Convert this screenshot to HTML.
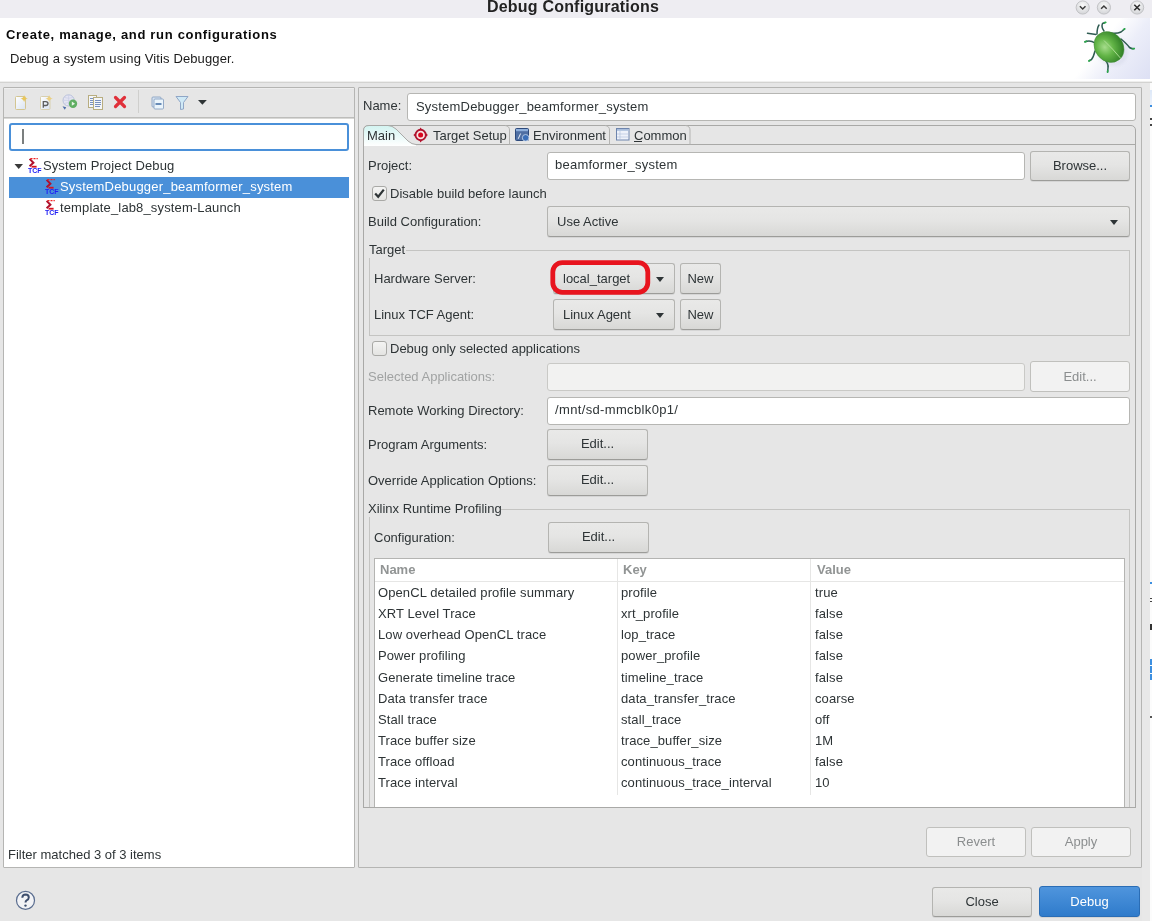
<!DOCTYPE html>
<html><head><meta charset="utf-8">
<style>
*{margin:0;padding:0;box-sizing:border-box}
html,body{width:1152px;height:921px;overflow:hidden}
body{position:relative;background:#e6e6e6;font-family:"Liberation Sans",sans-serif;font-size:13px;color:#2e3436}
.a{position:absolute}
.t{position:absolute;font:13px/15px "Liberation Sans",sans-serif;white-space:pre;color:#2e3436;will-change:transform}
.fld{position:absolute;background:#fff;border:1px solid #b6b6b3;border-radius:3px}
.btn{position:absolute;border:1px solid #b4b4b1;border-bottom-color:#9c9c99;border-radius:3px;background:linear-gradient(#e9e9e8 0%,#e5e5e4 45%,#d8d8d6 100%);box-shadow:0 1px 0 rgba(0,0,0,0.07);font:13px/15px "Liberation Sans",sans-serif;color:#2e3436;text-align:center}
.btn span{position:absolute;left:0;right:0;white-space:pre;will-change:transform}
.dis{background:#f2f2f2;border-color:#c0c0bd;border-bottom-color:#c0c0bd;box-shadow:none;color:#8b8e8f}
.line{position:absolute;background:#b8b8b6}
.cb{position:absolute;width:15px;height:15px;border:1px solid #a9a9a6;border-radius:3px;background:linear-gradient(#f4f4f3,#e4e4e2)}
.arr{position:absolute;width:0;height:0;border-left:4.5px solid transparent;border-right:4.5px solid transparent;border-top:5px solid #2e3436}
</style></head>
<body>
<!-- title bar -->
<div class="a" style="left:0;top:0;width:1152px;height:18px;background:#eeedf2"></div>
<div class="a" style="left:0;top:-2px;width:1146px;text-align:center;font:bold 16px/18px 'Liberation Sans',sans-serif;letter-spacing:0.2px;color:#222;will-change:transform">Debug Configurations</div>

<!-- header -->
<div class="a" style="left:0;top:18px;width:1152px;height:63px;background:#fff"></div>
<div class="a" style="left:0;top:81px;width:1152px;height:1px;background:#efefee"></div>
<div class="a" style="left:0;top:82px;width:1152px;height:1px;background:#d3d3d1"></div>
<div class="t" style="left:6px;top:27px;font:bold 13px/15px 'Liberation Sans',sans-serif;letter-spacing:0.68px;color:#0a0a0a">Create, manage, and run configurations</div>
<div class="t" style="left:10px;top:51px;letter-spacing:0.12px;color:#1a1a1a">Debug a system using Vitis Debugger.</div>

<!-- left panel -->
<div class="a" style="left:3px;top:87px;width:352px;height:781px;border:1px solid #b5b5b3;border-radius:1px;background:#fff"></div>
<div class="a" style="left:4px;top:88px;width:350px;height:29px;background:#e6e6e6"></div>
<div class="a" style="left:4px;top:117px;width:350px;height:1px;background:#bdbdbb"></div>
<div class="a" style="left:4px;top:118px;width:350px;height:1px;background:#d8d8d6"></div>
<div class="a" style="left:4px;top:88px;width:350px;height:1px;background:#eeeeee"></div>
<div class="a" style="left:9px;top:123px;width:340px;height:28px;border:2px solid #4a90d9;border-radius:3px;background:#fff"></div>
<div class="a" style="left:22px;top:129px;width:2px;height:15px;background:#7b7f7f"></div>
<div class="a" style="left:9px;top:177px;width:340px;height:21px;background:#4a90d9"></div>
<div class="t" style="left:43px;top:158px;letter-spacing:0.1px">System Project Debug</div>
<div class="t" style="left:60px;top:179px;color:#fff;letter-spacing:0.2px">SystemDebugger_beamformer_system</div>
<div class="t" style="left:60px;top:200px;letter-spacing:0.14px">template_lab8_system-Launch</div>
<div class="t" style="left:8px;top:847px">Filter matched 3 of 3 items</div>

<!-- right panel -->
<div class="a" style="left:358px;top:87px;width:784px;height:781px;border:1px solid #b5b5b3;border-radius:1px"></div>
<div class="t" style="left:363px;top:98px">Name:</div>
<div class="fld" style="left:407px;top:93px;width:729px;height:28px"></div>
<div class="t" style="left:416px;top:99px;letter-spacing:0.2px">SystemDebugger_beamformer_system</div>

<!-- tab folder -->
<div class="a" style="left:363px;top:125px;width:773px;height:683px;border:1px solid #a9a9a7;border-radius:5px 5px 0 0"></div>
<!-- tab shapes -->
<svg class="a" style="left:363px;top:125px" width="773" height="22" viewBox="0 0 773 22">
 <defs><linearGradient id="mt" x1="0" y1="0" x2="0" y2="1"><stop offset="0" stop-color="#d2f4f1"/><stop offset="1" stop-color="#ffffff"/></linearGradient></defs>
 <path d="M0.5 20 L0.5 6 Q0.5 0.5 6 0.5 L25 0.5 Q29 0.5 33 4 L45 16 Q49 19.5 53 19.5 L53 21 L0.5 21 Z" fill="url(#mt)"/>
 <path d="M0.5 21 L0.5 6 Q0.5 0.5 6 0.5 L25 0.5 Q29 0.5 33 4 L45 16 Q49 19.5 53 19.5 L772 19.5" fill="none" stroke="#a9a9a7" stroke-width="1"/>
 <path d="M142 0.5 Q146.5 1 146.5 5 L146.5 19.5" fill="none" stroke="#b4b4b2" stroke-width="1"/>
 <path d="M242 0.5 Q246.5 1 246.5 5 L246.5 19.5" fill="none" stroke="#b4b4b2" stroke-width="1"/>
 <path d="M322.5 0.5 Q327 1 327 5 L327 19.5" fill="none" stroke="#b4b4b2" stroke-width="1"/>
 <!-- target icon -->
 <circle cx="57.65" cy="10" r="4.4" fill="#fbe3e3"/>
 <path d="M57.65 2.6 L59 4.6 L56.3 4.6Z M57.65 17.4 L59 15.4 L56.3 15.4Z M65 10 L63 8.6 L63 11.4Z M50.3 10 L52.3 8.6 L52.3 11.4Z" fill="#b8102a"/>
 <circle cx="57.65" cy="10" r="5.2" fill="none" stroke="#b0132e" stroke-width="1.9"/>
 <circle cx="57.65" cy="10" r="2.5" fill="#d8061e"/>
 <!-- environment icon -->
 <rect x="152.5" y="3.5" width="13" height="12" rx="1" fill="#4f6fa3" stroke="#2d4a7c" stroke-width="1"/>
 <rect x="153" y="4" width="12" height="2.2" fill="#8fb0dc"/>
 <path d="M155.2 13.8 L157.6 8.5" stroke="#e8eef8" stroke-width="1"/>
 <circle cx="162.6" cy="12.8" r="3.3" fill="#3b6fb8" stroke="#c9d8ee" stroke-width="0.8"/>
 <!-- common icon -->
 <rect x="253.5" y="3.5" width="12.5" height="11.5" fill="#eef2fa" stroke="#6e85ad" stroke-width="1"/>
 <rect x="254" y="4" width="11.5" height="1.8" fill="#a9bddb"/>
 <path d="M257 6 V14.5 M254 9 H265.5 M254 12 H265.5" stroke="#b5c4dc" stroke-width="0.7"/>
</svg>
<div class="t" style="left:367px;top:128px">Main</div>
<div class="t" style="left:433px;top:128px">Target Setup</div>
<div class="t" style="left:533px;top:128px">Environment</div>
<div class="t" style="left:634px;top:128px">Common</div>

<div class="t" style="left:368px;top:158px">Project:</div>
<div class="fld" style="left:547px;top:152px;width:478px;height:28px"></div>
<div class="t" style="left:555px;top:157px;letter-spacing:0.24px">beamformer_system</div>
<div class="btn" style="left:1030px;top:151px;width:100px;height:30px"><span style="top:6px">Browse...</span></div>

<div class="cb" style="left:372px;top:186px"></div>
<div class="t" style="left:390px;top:186px">Disable build before launch</div>

<div class="t" style="left:368px;top:214px">Build Configuration:</div>
<div class="btn" style="left:547px;top:206px;width:583px;height:31px"></div>
<div class="t" style="left:557px;top:214px">Use Active</div>
<div class="arr" style="left:1110px;top:220px"></div>

<!-- Target group -->
<div class="a" style="left:369px;top:250px;width:761px;height:86px;border:1px solid #c4c4c2"></div>
<div class="a" style="left:368px;top:243px;width:38px;height:15px;background:#e6e6e6"></div>
<div class="t" style="left:369px;top:242px">Target</div>
<div class="t" style="left:374px;top:271px">Hardware Server:</div>
<div class="btn" style="left:553px;top:263px;width:122px;height:31px"></div>
<div class="t" style="left:563px;top:271px">local_target</div>
<div class="arr" style="left:656px;top:277px"></div>
<div class="btn" style="left:680px;top:263px;width:41px;height:31px"><span style="top:7px">New</span></div>
<div class="t" style="left:374px;top:307px">Linux TCF Agent:</div>
<div class="btn" style="left:553px;top:299px;width:122px;height:31px"></div>
<div class="t" style="left:563px;top:307px">Linux Agent</div>
<div class="arr" style="left:656px;top:313px"></div>
<div class="btn" style="left:680px;top:299px;width:41px;height:31px"><span style="top:7px">New</span></div>

<div class="cb" style="left:372px;top:341px"></div>
<div class="t" style="left:390px;top:341px">Debug only selected applications</div>

<div class="t" style="left:368px;top:369px;color:#a1a3a3">Selected Applications:</div>
<div class="fld" style="left:547px;top:363px;width:478px;height:28px;background:#f2f2f1;border-color:#c9c9c6"></div>
<div class="btn dis" style="left:1030px;top:361px;width:100px;height:31px"><span style="top:7px">Edit...</span></div>

<div class="t" style="left:368px;top:403px">Remote Working Directory:</div>
<div class="fld" style="left:547px;top:397px;width:583px;height:28px"></div>
<div class="t" style="left:555px;top:402px;letter-spacing:0.35px">/mnt/sd-mmcblk0p1/</div>

<div class="t" style="left:368px;top:437px">Program Arguments:</div>
<div class="btn" style="left:547px;top:429px;width:101px;height:31px"><span style="top:6px">Edit...</span></div>
<div class="t" style="left:368px;top:473px">Override Application Options:</div>
<div class="btn" style="left:547px;top:465px;width:101px;height:31px"><span style="top:6px">Edit...</span></div>

<!-- Xilinx group -->
<div class="a" style="left:369px;top:509px;width:761px;height:299px;border:1px solid #c4c4c2;border-bottom:none"></div>
<div class="a" style="left:368px;top:502px;width:133px;height:15px;background:#e6e6e6"></div>
<div class="t" style="left:368px;top:501px">Xilinx Runtime Profiling</div>
<div class="t" style="left:374px;top:530px">Configuration:</div>
<div class="btn" style="left:548px;top:522px;width:101px;height:31px"><span style="top:6px">Edit...</span></div>

<!-- table -->
<div class="a" style="left:374px;top:558px;width:751px;height:250px;border:1px solid #b4b4b2;border-bottom:none;background:#fff"></div>
<div class="a" style="left:375px;top:581px;width:749px;height:1px;background:#e6e6e5"></div>
<div class="a" style="left:617px;top:559px;width:1px;height:236px;background:#e6e6e5"></div>
<div class="a" style="left:810px;top:559px;width:1px;height:236px;background:#e6e6e5"></div>
<div class="t" style="left:380px;top:562px;font-weight:bold;color:#919494">Name</div>
<div class="t" style="left:623px;top:562px;font-weight:bold;color:#919494">Key</div>
<div class="t" style="left:817px;top:562px;font-weight:bold;color:#919494">Value</div>
<div class="a" id="rows" style="left:0;top:0;letter-spacing:0.1px">
<div class="t" style="left:378px;top:585px">OpenCL detailed profile summary</div><div class="t" style="left:621px;top:585px">profile</div><div class="t" style="left:815px;top:585px">true</div>
<div class="t" style="left:378px;top:606px">XRT Level Trace</div><div class="t" style="left:621px;top:606px">xrt_profile</div><div class="t" style="left:815px;top:606px">false</div>
<div class="t" style="left:378px;top:627px">Low overhead OpenCL trace</div><div class="t" style="left:621px;top:627px">lop_trace</div><div class="t" style="left:815px;top:627px">false</div>
<div class="t" style="left:378px;top:648px">Power profiling</div><div class="t" style="left:621px;top:648px">power_profile</div><div class="t" style="left:815px;top:648px">false</div>
<div class="t" style="left:378px;top:670px">Generate timeline trace</div><div class="t" style="left:621px;top:670px">timeline_trace</div><div class="t" style="left:815px;top:670px">false</div>
<div class="t" style="left:378px;top:691px">Data transfer trace</div><div class="t" style="left:621px;top:691px">data_transfer_trace</div><div class="t" style="left:815px;top:691px">coarse</div>
<div class="t" style="left:378px;top:712px">Stall trace</div><div class="t" style="left:621px;top:712px">stall_trace</div><div class="t" style="left:815px;top:712px">off</div>
<div class="t" style="left:378px;top:733px">Trace buffer size</div><div class="t" style="left:621px;top:733px">trace_buffer_size</div><div class="t" style="left:815px;top:733px">1M</div>
<div class="t" style="left:378px;top:754px">Trace offload</div><div class="t" style="left:621px;top:754px">continuous_trace</div><div class="t" style="left:815px;top:754px">false</div>
<div class="t" style="left:378px;top:775px">Trace interval</div><div class="t" style="left:621px;top:775px">continuous_trace_interval</div><div class="t" style="left:815px;top:775px">10</div>
</div>


<!-- window buttons -->
<svg class="a" style="left:1070px;top:0" width="82" height="18" viewBox="0 0 82 18">
 <defs><radialGradient id="wb" cx="50%" cy="35%" r="60%"><stop offset="0" stop-color="#fbfbfb"/><stop offset="1" stop-color="#d6d7da"/></radialGradient></defs>
 <circle cx="12.7" cy="7.5" r="6.6" fill="url(#wb)" stroke="#b9babd" stroke-width="0.8"/>
 <path d="M9.9 6.3 L12.7 9 L15.5 6.3" fill="none" stroke="#3a3a3a" stroke-width="1.5"/>
 <circle cx="33.9" cy="7.5" r="6.6" fill="url(#wb)" stroke="#b9babd" stroke-width="0.8"/>
 <path d="M31.1 8.7 L33.9 6 L36.7 8.7" fill="none" stroke="#3a3a3a" stroke-width="1.5"/>
 <circle cx="67.1" cy="7.5" r="6.6" fill="url(#wb)" stroke="#b9babd" stroke-width="0.8"/>
 <path d="M64.3 4.7 L69.9 10.3 M69.9 4.7 L64.3 10.3" fill="none" stroke="#2e2e2e" stroke-width="1.6"/>
</svg>

<!-- header beetle -->
<div class="a" style="left:1050px;top:18px;width:100px;height:61px;background:linear-gradient(128deg,#ffffff 48%,#eceef9 68%,#dde0f4 100%)"></div>
<svg class="a" style="left:1072px;top:16px" width="80" height="70" viewBox="0 0 80 70">
 <defs>
  <radialGradient id="bg1" cx="38%" cy="42%" r="65%"><stop offset="0" stop-color="#a6dd8c"/><stop offset="0.45" stop-color="#62b446"/><stop offset="1" stop-color="#2e7d25"/></radialGradient>
  <filter id="sh" x="-20%" y="-20%" width="140%" height="140%"><feGaussianBlur stdDeviation="1.5"/></filter>
 </defs>
 <ellipse cx="40" cy="34" rx="15" ry="17" transform="rotate(-40 40 34)" fill="#c9cde0" opacity="0.35" filter="url(#sh)"/>
 <g fill="none" stroke="#2f5b52" stroke-width="1.5" stroke-linecap="round" stroke-linejoin="round">
  <path d="M25 18 Q25 12 27 9"/>
  <path d="M32 15 Q29 11 30.5 7.5 L33 6.5"/>
  <path d="M38 17 Q45 18 49 16 Q51.5 14 52.5 13"/>
  <path d="M49 23 Q55 28 57.5 31.5 Q59.5 32.8 62 32.6"/>
  <path d="M31 42 Q37 47 36 52 L35.6 56"/>
  <path d="M23 35 Q21.5 41 19.5 43.5 L17.3 44.8"/>
  <path d="M23 27 Q18 23.5 13 25.8"/>
  <path d="M24 18.5 L15.5 17.3"/>
 </g>
 <g stroke="#2aa84a" stroke-width="1.6" stroke-linecap="round">
  <path d="M32.3 7 L33.8 6.3"/><path d="M51.5 13.6 L52.8 12.8"/><path d="M60.5 32.8 L62.3 32.6"/><path d="M35.7 54.5 L35.6 56.3"/><path d="M18 44.3 L16.8 45"/><path d="M14.5 25.2 L12.8 26"/>
 </g>
 <ellipse cx="37" cy="31" rx="14" ry="16.3" transform="rotate(-40 37 31)" fill="url(#bg1)" stroke="#3f8a35" stroke-width="0.5"/>
 <path d="M32 24.5 Q41 33 48.8 42.5" stroke="#b4e39c" stroke-width="0.9" fill="none"/>
 <path d="M24.5 21 Q29 16.5 34 18" stroke="#4f9a3a" stroke-width="1" fill="none"/>
</svg>

<!-- left toolbar icons -->
<svg class="a" style="left:10px;top:90px" width="200" height="26" viewBox="0 0 200 26">
 <defs>
  <linearGradient id="pg" x1="0" y1="0" x2="1" y2="1"><stop offset="0" stop-color="#ffffff"/><stop offset="1" stop-color="#d9e3f2"/></linearGradient>
 </defs>
 <!-- new -->
 <rect x="5.5" y="6.5" width="10" height="13" rx="1" fill="url(#pg)" stroke="#d3c592" stroke-width="1"/>
 <path d="M14.1 4.9 Q14.7 8 17.8 8.6 Q14.7 9.2 14.1 12.3 Q13.5 9.2 10.4 8.6 Q13.5 8 14.1 4.9Z" fill="#e9c65a"/>
 <!-- new proto -->
 <rect x="30.5" y="6.5" width="9.5" height="13" rx="1" fill="url(#pg)" stroke="#d8cfae" stroke-width="1"/>
 <path d="M33.3 17.8 L33.3 11.6 L35.8 11.6 Q38 11.7 38 13.6 Q38 15.5 35.8 15.5 L33.3 15.5" fill="none" stroke="#5c5c5c" stroke-width="1.3"/>
 <path d="M39.1 4.9 Q39.7 8 42.8 8.6 Q39.7 9.2 39.1 12.3 Q38.5 9.2 35.4 8.6 Q38.5 8 39.1 4.9Z" fill="#ecd080"/>
 <!-- launch -->
 <circle cx="58.6" cy="10.4" r="5.6" fill="#e4e4f2" stroke="#b3bcd8" stroke-width="0.9"/>
 <path d="M53.5 10.4 H63.7 M58.6 5 V15.8 M54.5 7.5 Q58.6 9 62.7 7.5 M54.5 13.3 Q58.6 11.8 62.7 13.3" stroke="#c5cbe3" stroke-width="0.6" fill="none"/>
 <circle cx="63" cy="13.7" r="4.2" fill="#5fae62"/>
 <path d="M61.8 11.6 L65 13.7 L61.8 15.8Z" fill="#e8f5e8"/>
 <path d="M52.5 16.2 L56.2 17.2 L54.8 19.8Z" fill="#4a6aa8"/>
 <!-- duplicate -->
 <rect x="78.5" y="5.5" width="8" height="12" fill="#f4f6fa" stroke="#b8ad80" stroke-width="1"/>
 <rect x="83.5" y="7.5" width="9" height="12" fill="#f4f6fa" stroke="#b8ad80" stroke-width="1"/>
 <path d="M85 10.5h6M85 12.5h6M85 14.5h6M85 16.5h5M80 8.5h3M80 10.5h3M80 12.5h3M80 14.5h3" stroke="#6b86b8" stroke-width="0.9"/>
 <!-- delete -->
 <path d="M105.5 7.5 L114.5 16.5 M114.5 7.5 L105.5 16.5" stroke="#e0303a" stroke-width="3.2" stroke-linecap="round"/>
 <!-- separator -->
 <rect x="128" y="0" width="1" height="23" fill="#cfcfcd"/>
 <!-- collapse -->
 <rect x="142" y="7" width="9" height="10" rx="1" fill="#d7e4f2" stroke="#8aa3c2" stroke-width="0.9"/>
 <rect x="144" y="9" width="9.5" height="10" rx="1" fill="#eaf4fb" stroke="#8aa3c2" stroke-width="0.9"/>
 <rect x="145.5" y="13.3" width="6" height="1.4" fill="#2f5f9a"/>
 <!-- filter -->
 <path d="M166 6.5 L178 6.5 L173.5 12.5 L173.5 19 L170.5 19.5 L170.5 12.5 Z" fill="#cfe9f6" stroke="#8fa6c6" stroke-width="1"/>
 <!-- dropdown -->
 <path d="M188 10 L196.8 10 L192.4 14.8Z" fill="#2e3436"/>
</svg>

<!-- tree -->
<svg class="a" style="left:10px;top:155px" width="60" height="65" viewBox="0 0 60 65">
 <path d="M4.5 9 L13 9 L8.7 14Z" fill="#3a3a3a"/>
 <defs><g id="tcf">
  <path d="M19.6 3.9 L23.4 7.7 L19.6 11.2" fill="none" stroke="#b0102c" stroke-width="2"/>
  <path d="M20.5 3.6 L27.8 3.6" stroke="#f02020" stroke-width="1.4" stroke-dasharray="2 1"/>
  <path d="M21.5 11.7 L26.6 11.7" stroke="#d8101e" stroke-width="1.8"/>
  <text x="18" y="17.9" font-family="Liberation Sans" font-weight="bold" font-size="7" fill="#2020f4">TCF</text>
 </g></defs>
 <use href="#tcf"/>
 <use href="#tcf" transform="translate(17 21)"/>
 <use href="#tcf" transform="translate(17 42)"/>
</svg>

<!-- help -->
<svg class="a" style="left:14px;top:889px" width="24" height="24" viewBox="0 0 24 24">
 <circle cx="11.5" cy="11.4" r="9" fill="#f2f3f6" stroke="#5a6d8f" stroke-width="1.2"/>
 <path d="M8.3 8.8 Q8.5 5.6 11.6 5.6 Q14.8 5.7 14.8 8.5 Q14.7 10.4 12.6 11.4 Q11.5 12 11.5 13.6" fill="none" stroke="#3e4f6e" stroke-width="2"/>
 <circle cx="11.5" cy="16.6" r="1.2" fill="#3e4f6e"/>
</svg>


<div class="a" style="left:634px;top:141px;width:8px;height:1px;background:#2e3436"></div>

<!-- red highlight -->
<svg class="a" style="left:548px;top:258px" width="106" height="40" viewBox="0 0 106 40">
 <rect x="4.8" y="4.6" width="95" height="29.7" rx="9.5" ry="9.5" fill="none" stroke="#e8141e" stroke-width="4.8"/>
</svg>

<!-- checkmark -->
<svg class="a" style="left:372px;top:186px" width="15" height="15" viewBox="0 0 15 15">
 <path d="M3.2 7.5 L6.2 10.8 L11.8 3.6" fill="none" stroke="#2e3436" stroke-width="2.2"/>
</svg>

<!-- right edge strip -->
<div class="a" style="left:1142px;top:83px;width:8px;height:838px;background:#e8e8e8"></div>
<div class="a" style="left:1150px;top:83px;width:2px;height:838px;background:#fcfcfc"></div>
<div class="a" style="left:1150px;top:90px;width:2px;height:15px;background:linear-gradient(#dde8f8,#eef3fb)"></div>
<div class="a" style="left:1150px;top:105px;width:2px;height:2px;background:#3d8fe0"></div>
<div class="a" style="left:1150px;top:118px;width:2px;height:2px;background:#444"></div>
<div class="a" style="left:1150px;top:124px;width:2px;height:2px;background:#444"></div>
<div class="a" style="left:1150px;top:582px;width:2px;height:2px;background:#3d8fe0"></div>
<div class="a" style="left:1150px;top:598px;width:2px;height:1px;background:#444"></div>
<div class="a" style="left:1150px;top:601px;width:2px;height:1px;background:#444"></div>
<div class="a" style="left:1150px;top:624px;width:2px;height:6px;background:#333"></div>
<div class="a" style="left:1150px;top:659px;width:2px;height:21px;background:#3d8fe0"></div>
<div class="a" style="left:1150px;top:665px;width:2px;height:1px;background:#fff"></div>
<div class="a" style="left:1150px;top:673px;width:2px;height:1px;background:#fff"></div>
<div class="a" style="left:1150px;top:716px;width:2px;height:2px;background:#555"></div>
<div class="a" style="left:363px;top:807px;width:773px;height:1px;background:#a9a9a7"></div>
<!-- bottom buttons -->
<div class="btn dis" style="left:926px;top:827px;width:100px;height:30px"><span style="top:6px">Revert</span></div>
<div class="btn dis" style="left:1031px;top:827px;width:100px;height:30px"><span style="top:6px">Apply</span></div>
<div class="btn" style="left:932px;top:887px;width:100px;height:30px"><span style="top:6px">Close</span></div>
<div class="btn" style="left:1039px;top:886px;width:101px;height:31px;background:linear-gradient(#4f95dd,#2f7bcb);border-color:#2a6db5;color:#fff"><span style="top:7px">Debug</span></div>

</body></html>
